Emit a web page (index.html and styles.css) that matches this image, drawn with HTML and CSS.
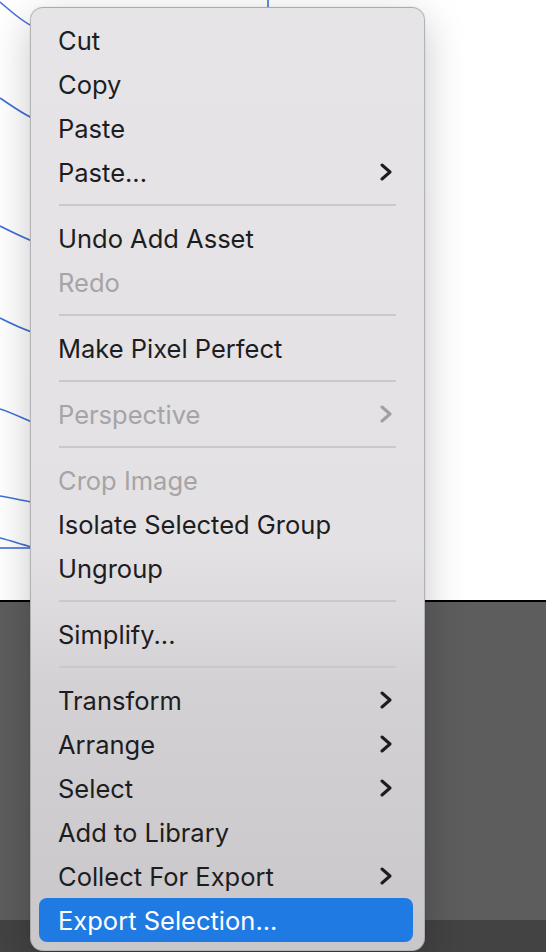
FILE: index.html
```html
<!DOCTYPE html>
<html lang="en">

<head>
    <meta charset="UTF-8">
    <meta name="viewport" content="width=device-width, initial-scale=1.0">
    <title>Context Menu</title>
    <link rel="stylesheet" href="styles.css">
</head>

<body>

    <!-- Artboard with connector lines -->
    <div class="artboard">
        <svg class="wires" width="546" height="600" viewBox="0 0 546 600">
            <path d="M0 2 C 12 12, 20 20, 32 26" />
            <path d="M0 98 C 12 106, 20 112, 32 118" />
            <path d="M0 226 C 12 232, 20 236, 32 241" />
            <path d="M0 318 C 12 324, 20 328, 32 332" />
            <path d="M0 409 C 12 413, 20 417, 32 422" />
            <path d="M0 496 C 12 498, 20 500, 32 502" />
            <path d="M0 538 C 12 541, 20 544, 32 547" />
            <path d="M0 548 L 32 548" />
            <path d="M268 0 L 268 8" />
        </svg>
    </div>

    <!-- Dark workspace below the artboard -->
    <div class="workspace"></div>
    <div class="statusbar"></div>

    <!-- Context menu -->
    <div class="menu">
        <div class="item">Cut</div>
        <div class="item">Copy</div>
        <div class="item">Paste</div>
        <div class="item has-sub">Paste...
            <svg class="chevron" width="12" height="18" viewBox="0 0 12 18"><path d="M2 2 L10 9 L2 16" /></svg>
        </div>
        <div class="separator"></div>
        <div class="item">Undo Add Asset</div>
        <div class="item disabled">Redo</div>
        <div class="separator"></div>
        <div class="item">Make Pixel Perfect</div>
        <div class="separator"></div>
        <div class="item has-sub disabled">Perspective
            <svg class="chevron" width="12" height="18" viewBox="0 0 12 18"><path d="M2 2 L10 9 L2 16" /></svg>
        </div>
        <div class="separator"></div>
        <div class="item disabled">Crop Image</div>
        <div class="item">Isolate Selected Group</div>
        <div class="item">Ungroup</div>
        <div class="separator"></div>
        <div class="item">Simplify...</div>
        <div class="separator"></div>
        <div class="item has-sub">Transform
            <svg class="chevron" width="12" height="18" viewBox="0 0 12 18"><path d="M2 2 L10 9 L2 16" /></svg>
        </div>
        <div class="item has-sub">Arrange
            <svg class="chevron" width="12" height="18" viewBox="0 0 12 18"><path d="M2 2 L10 9 L2 16" /></svg>
        </div>
        <div class="item has-sub">Select
            <svg class="chevron" width="12" height="18" viewBox="0 0 12 18"><path d="M2 2 L10 9 L2 16" /></svg>
        </div>
        <div class="item">Add to Library</div>
        <div class="item has-sub">Collect For Export
            <svg class="chevron" width="12" height="18" viewBox="0 0 12 18"><path d="M2 2 L10 9 L2 16" /></svg>
        </div>
        <div class="item active">Export Selection...</div>
    </div>

</body>

</html>
```

FILE: styles.css
```css
/* Page */
body {
    margin: 0;
    padding: 0;
    width: 546px;
    height: 952px;
    overflow: hidden;
    position: relative;
    background-color: #434343;
    font-family: Inter, "Noto Sans", sans-serif;
}

/* Artboard */
.artboard {
    height: 600px;
    background-color: #ffffff;
    border-bottom: 2px solid #000000;
}

.wires path {
    fill: none;
    stroke: #3f6fd8;
    stroke-width: 1.6;
}

/* Workspace areas */
.workspace {
    height: 318px;
    background-color: #5d5d5d;
}

.statusbar {
    height: 32px;
    background-color: #434343;
}

/* Menu panel */
.menu {
    position: absolute;
    left: 30px;
    top: 7px;
    width: 374px;
    padding: 10px 11px 8px 8px;
    border: 1px solid rgba(160, 158, 162, 0.7);
    border-radius: 13px;
    background: linear-gradient(to bottom, #e6e4e6 0, #e3e1e3 540px, #d3d1d3 680px, #c9c7c9 100%);
    box-shadow: 0 12px 40px rgba(0, 0, 0, 0.22), 0 0 2px rgba(0, 0, 0, 0.12);
}

/* Menu items */
.item {
    height: 44px;
    display: flex;
    align-items: center;
    justify-content: space-between;
    padding: 0 21px 0 19px;
    font-size: 25.5px;
    color: #1d1d1f;
    border-radius: 8px;
}

.item.disabled {
    color: #a5a4a6;
}

.item.active {
    background-color: #1f7ae3;
    color: #ffffff;
}

/* Submenu arrow */
.chevron path {
    fill: none;
    stroke: #1d1d1f;
    stroke-width: 3;
    stroke-linecap: round;
    stroke-linejoin: round;
}

.disabled .chevron path {
    stroke: #a09fa1;
}

/* Separator */
.separator {
    height: 2px;
    margin: 10px 17px 10px 20px;
    background-color: #cac8ca;
}
```
